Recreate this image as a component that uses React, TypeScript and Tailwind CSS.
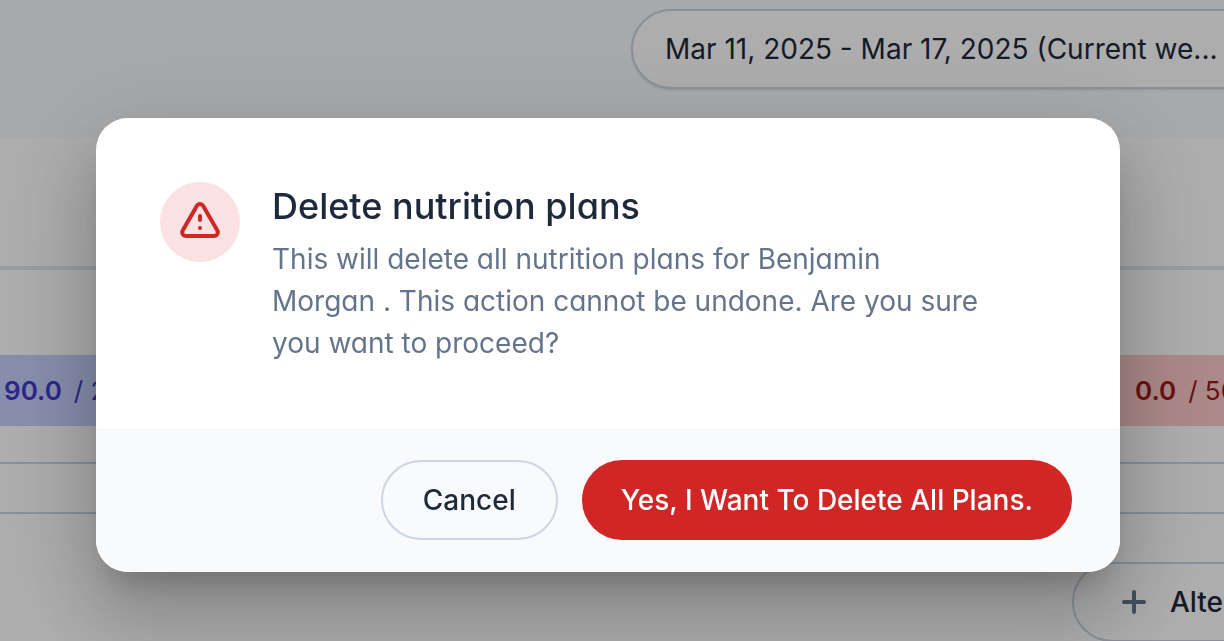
import type { ReactNode } from 'react';

function WarningIcon() {
  return (
    <svg viewBox="0 0 48 48" className="size-12" fill="none" stroke="currentColor" strokeLinecap="round" strokeLinejoin="round" aria-hidden="true">
      <path
        strokeWidth="4"
        d="M20.9 7.8 6.8 32.3C5.3 34.8 6.9 38 9.9 38H38.1C41.1 38 42.7 34.8 41.2 32.3L27.1 7.8C25.7 5.4 22.3 5.4 20.9 7.8Z"
      />
      <path strokeWidth="4" d="M24 18v4" />
      <path strokeWidth="4" d="M24 30v.01" />
    </svg>
  );
}

function PlusIcon() {
  return (
    <svg viewBox="0 0 24 24" className="size-6 shrink-0" fill="none" stroke="currentColor" strokeWidth="4" strokeLinecap="round" aria-hidden="true">
      <path d="M12 2v20M2 12h20" />
    </svg>
  );
}

function Macro({ value, children, className }: { value: string; children: ReactNode; className: string }) {
  return (
    <div className={`flex h-full items-center gap-3 text-[26px] whitespace-nowrap ${className}`}>
      <strong className="font-semibold">{value}</strong>
      <span>{children}</span>
    </div>
  );
}

function PlansPage() {
  return (
    <main className="min-h-screen overflow-hidden bg-white text-[28px] leading-10 text-[#1e293b]">
      <header className="flex h-[138px] justify-end bg-[#f8fafc] pt-[9px]">
        <button
          type="button"
          className="-mr-12 flex h-20 w-[641px] shrink-0 items-center rounded-full border-2 border-[#cbd5e1] bg-white px-8 whitespace-nowrap shadow-sm"
        >
          Mar 11, 2025 - Mar 17, 2025 (Current we...
        </button>
      </header>
      <div className="h-32" />
      <div className="border-t-4 border-[#e2e8f0] pt-[85px]">
        <div className="flex h-[71px] justify-between">
          <Macro value="90.0" className="w-1/2 bg-[#c7d2fe] pl-1 text-[#4338ca]">/ 200.0 g</Macro>
          <Macro value="0.0" className="w-[104px] overflow-hidden bg-[#fecaca] pl-[15px] text-[#991b1b]">/ 50.0 g</Macro>
        </div>
      </div>
      <div className="mt-9 h-[52px] border-y-2 border-[#cbd5e1]" />
      <div className="mt-12 flex justify-end">
        <button
          type="button"
          className="-mr-24 flex h-20 w-[248px] shrink-0 items-center gap-6 rounded-full border-2 border-[#cbd5e1] px-12 font-medium whitespace-nowrap"
        >
          <span className="text-[#64748b]"><PlusIcon /></span>
          Alternatives
        </button>
      </div>
    </main>
  );
}

function DeleteDialog() {
  return (
    <div className="fixed inset-0 flex items-start justify-center bg-black/32 pt-[118px] pr-[104px] pl-24">
      <section
        role="alertdialog"
        aria-modal="true"
        aria-labelledby="dialog-title"
        aria-describedby="dialog-text"
        className="w-full max-w-5xl overflow-hidden rounded-[32px] bg-white shadow-[0_22px_30px_-14px_rgba(0,0,0,0.2),0_48px_76px_6px_rgba(0,0,0,0.14),0_18px_92px_16px_rgba(0,0,0,0.12)]"
      >
        <div className="flex gap-8 p-16">
          <div className="flex size-20 shrink-0 items-center justify-center rounded-full bg-[#fae2e2] text-[#d02626]">
            <WarningIcon />
          </div>
          <div className="max-w-[710px] [font-feature-settings:'cv11']">
            <h2 id="dialog-title" className="text-4xl leading-[48px] font-medium text-[#1e293b]">Delete nutrition plans</h2>
            <p id="dialog-text" className="mt-2 text-[28px] leading-[42px] text-[#64748b]">
              This will delete all nutrition plans for Benjamin Morgan . This action cannot be undone. Are you sure you want to proceed?
            </p>
          </div>
        </div>
        <footer className="flex justify-end gap-6 bg-[#f8fafc] px-12 py-8 text-[28px] leading-10 font-medium">
          <button type="button" className="h-20 rounded-full border-2 border-[#cdd5e3] px-10 text-[#1e293b]">Cancel</button>
          <button type="button" className="h-20 rounded-full bg-[#d02626] px-[39px] text-white">Yes, I Want To Delete All Plans.</button>
        </footer>
      </section>
    </div>
  );
}

export default function App() {
  return (
    <div className="font-['Inter','Liberation_Sans',sans-serif]">
      <PlansPage />
      <DeleteDialog />
    </div>
  );
}
